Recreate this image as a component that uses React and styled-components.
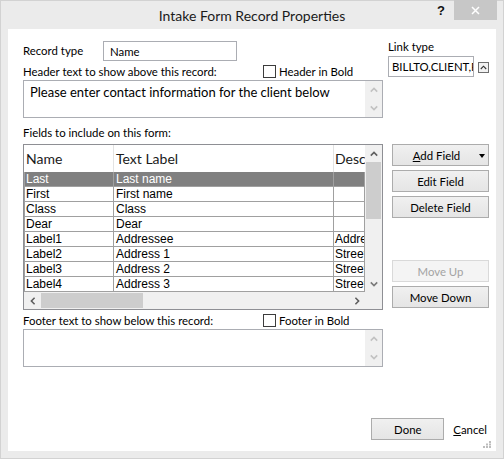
import React from "react";
import styled, { createGlobalStyle } from "styled-components";

const UI = `Lato, "Noto Sans", "Liberation Sans", sans-serif`;
const LEGACY = `"Liberation Sans", Arial, sans-serif`;

const GlobalStyle = createGlobalStyle`
  html, body { margin: 0; padding: 0; background: #ffffff; }
  body { font-family: ${UI}; font-size: 11.4px; color: #000; }
  * { box-sizing: border-box; }
`;

const Window = styled.div`
  width: 504px;
  height: 459px;
  background: #ebebeb;
  border: 1px solid #d2d2d2;
  display: flex;
  flex-direction: column;
`;

const TitleBar = styled.div`
  height: 28px;
  flex: none;
  display: flex;
  align-items: center;
  justify-content: center;
  position: relative;
`;

const Title = styled.div`
  font-size: 14px;
  color: #1b1b1b;
  padding-top: 1px;
`;

const CaptionButtons = styled.div`
  position: absolute;
  top: -1px;
  right: 6px;
  display: flex;
`;

const HelpButton = styled.div`
  width: 26px;
  height: 20px;
  display: flex;
  align-items: center;
  justify-content: center;
  font-family: ${LEGACY};
  font-weight: bold;
  font-size: 13px;
  color: #111;
`;

const CloseButton = styled.div`
  width: 43px;
  height: 20px;
  background: #c7c7c7;
  display: flex;
  align-items: center;
  justify-content: center;
`;

const Client = styled.div`
  flex: 1;
  margin: 0 7px 7px;
  background: #ffffff;
  padding: 10px 7px 11px 15px;
  display: flex;
  flex-direction: column;
  position: relative;
`;

const Body = styled.div`
  display: grid;
  grid-template-columns: 360px 101px;
  column-gap: 5px;
`;

const LeftColumn = styled.div`
  display: flex;
  flex-direction: column;
`;

const RightColumn = styled.div`
  display: flex;
  flex-direction: column;
`;

const RecordRow = styled.div`
  margin-top: 2px;
  height: 20px;
  display: flex;
  align-items: center;
`;

const FieldLabel = styled.span`
  width: 80px;
  line-height: 16px;
`;

const TextInput = styled.div`
  width: ${(p) => p.$width}px;
  height: ${(p) => p.$height || 20}px;
  border: 1px solid #abadb3;
  padding: 0 ${(p) => p.$pad ?? 6}px;
  display: flex;
  align-items: center;
  white-space: nowrap;
  overflow: hidden;
  background: #fff;
`;

const CheckRow = styled.div`
  height: ${(p) => p.$height}px;
  padding-top: 2px;
  display: grid;
  grid-template-columns: 240px auto;
  align-items: center;
`;

const CheckLabel = styled.label`
  display: flex;
  align-items: center;
  gap: 3px;
`;

const Box = styled.span`
  width: 13px;
  height: 13px;
  border: 1px solid #3c3c3c;
  background: #fff;
`;

const Memo = styled.div`
  height: 38px;
  border: 1px solid #abadb3;
  display: flex;
`;

const MemoText = styled.div`
  flex: 1;
  padding: 2px 6px;
  font-family: ${UI};
  font-size: 13px;
  line-height: 18px;
`;

const MemoScroll = styled.div`
  width: 17px;
  background: #f0f0f0;
  display: flex;
  flex-direction: column;
  justify-content: space-between;
`;

const ArrowCell = styled.div`
  width: ${(p) => p.$w || 17}px;
  height: ${(p) => p.$h || 17}px;
  display: flex;
  align-items: center;
  justify-content: center;
  flex: none;
`;

const SectionLabel = styled.div`
  height: 26px;
  padding-top: 7px;
  line-height: 16px;
`;

const Table = styled.div`
  height: 166px;
  border: 1px solid #8e8f94;
  display: grid;
  grid-template-columns: 341px 17px;
  grid-template-rows: 147px 17px;
  background: #fff;
`;

const ListArea = styled.div`
  overflow: hidden;
`;

const HeaderRow = styled.div`
  display: grid;
  grid-template-columns: 90px 220px 31px;
  height: 27px;
`;

const HeaderCell = styled.div`
  font-family: ${UI};
  font-size: 14px;
  display: flex;
  align-items: center;
  padding-left: ${(p) => p.$pad}px;
  border-right: ${(p) => (p.$last ? "none" : "1px solid #e3e3e3")};
  white-space: nowrap;
  overflow: hidden;
  color: #1a1a1a;
`;

const Row = styled.div`
  display: grid;
  grid-template-columns: 90px 220px 31px;
  height: 15px;
  background: ${(p) => (p.$selected ? "#808080" : "#ffffff")};
  color: ${(p) => (p.$selected ? "#ffffff" : "#000000")};
`;

const Cell = styled.div`
  font-family: ${LEGACY};
  font-size: 12px;
  line-height: 14px;
  padding-left: ${(p) => p.$pad}px;
  border-bottom: 1px solid #a0a0a0;
  border-right: 1px solid #a0a0a0;
  border-left: ${(p) => (p.$first ? "1px solid #a0a0a0" : "none")};
  white-space: nowrap;
  overflow: hidden;
`;

const VScroll = styled.div`
  background: #f0f0f0;
  display: flex;
  flex-direction: column;
`;

const VThumb = styled.div`
  height: 57px;
  margin: 0 1px;
  background: #cdcdcd;
`;

const Spacer = styled.div`
  flex: 1;
`;

const HScroll = styled.div`
  background: #f0f0f0;
  display: flex;
  align-items: stretch;
`;

const HThumb = styled.div`
  width: 102px;
  margin: 1px 0;
  background: #cdcdcd;
`;

const Corner = styled.div`
  background: #f0f0f0;
`;

const LinkLabel = styled.div`
  line-height: 16px;
`;

const LinkRow = styled.div`
  margin-top: 1px;
  display: flex;
  align-items: center;
  gap: 4px;
`;

const SpinButton = styled.div`
  width: 11px;
  height: 11px;
  border: 1px solid #6f6f6f;
  background: #f2f2f2;
  display: flex;
  align-items: center;
  justify-content: center;
  margin-top: 1px;
`;

const ButtonStack = styled.div`
  margin-top: 67px;
  padding-left: 4px;
  display: flex;
  flex-direction: column;
  gap: 4px;
`;

const Button = styled.div`
  width: ${(p) => p.$width || 97}px;
  height: 22px;
  margin-top: ${(p) => p.$gapTop || 0}px;
  border: 1px solid ${(p) => (p.$disabled ? "#d9d9d9" : "#acacac")};
  background: ${(p) =>
    p.$disabled ? "#f4f4f4" : "linear-gradient(#f0f0f0, #e5e5e5)"};
  color: ${(p) => (p.$disabled ? "#a3a3a3" : "#000")};
  display: flex;
  align-items: center;
  justify-content: center;
  position: relative;
  font-size: 11.4px;
  flex: none;
`;

const ButtonText = styled.span`
  padding-right: ${(p) => p.$shift || 0}px;
`;

const Caret = styled.span`
  position: absolute;
  right: 3px;
  top: 9px;
  width: 0;
  height: 0;
  border-left: 3.5px solid transparent;
  border-right: 3.5px solid transparent;
  border-top: 4px solid #000;
`;

const U = styled.span`
  text-decoration: underline;
  text-underline-offset: 1px;
`;

const FooterRow = styled.div`
  margin-top: auto;
  display: flex;
  justify-content: flex-end;
  align-items: center;
  gap: 9px;
  padding-right: 2px;
`;

const LinkText = styled.span`
  font-size: 11.4px;
`;

const Grip = styled.svg`
  position: absolute;
  right: 5px;
  bottom: 3px;
`;

const Chevron = ({ dir = "up", color = "#606060" }) => {
  const rot = { up: 0, down: 180, left: -90, right: 90 }[dir];
  return (
    <svg width="8" height="8" viewBox="0 0 8 8" style={{ transform: `rotate(${rot}deg)` }}>
      <polyline
        points="0.8,5.6 4,2.4 7.2,5.6"
        fill="none"
        stroke={color}
        strokeWidth="1.6"
      />
    </svg>
  );
};

const rows = [
  ["Last", "Last name", "", true],
  ["First", "First name", ""],
  ["Class", "Class", ""],
  ["Dear", "Dear", ""],
  ["Label1", "Addressee", "Addressee"],
  ["Label2", "Address 1", "Street 1"],
  ["Label3", "Address 2", "Street 2"],
  ["Label4", "Address 3", "Street 3"],
];

export default function App() {
  return (
    <>
      <GlobalStyle />
      <Window>
        <TitleBar>
          <Title>Intake Form Record Properties</Title>
          <CaptionButtons>
            <HelpButton>?</HelpButton>
            <CloseButton>
              <svg width="9" height="9" viewBox="0 0 9 9">
                <path d="M1 1 L8 8 M8 1 L1 8" stroke="#fff" strokeWidth="1.5" />
              </svg>
            </CloseButton>
          </CaptionButtons>
        </TitleBar>
        <Client>
          <Body>
            <LeftColumn>
              <RecordRow>
                <FieldLabel>Record type</FieldLabel>
                <TextInput $width={134}>Name</TextInput>
              </RecordRow>
              <CheckRow $height={19}>
                <span>Header text to show above this record:</span>
                <CheckLabel>
                  <Box />
                  Header in Bold
                </CheckLabel>
              </CheckRow>
              <Memo>
                <MemoText>Please enter contact information for the client below</MemoText>
                <MemoScroll>
                  <ArrowCell $h={18}>
                    <Chevron dir="up" color="#c2c2c2" />
                  </ArrowCell>
                  <ArrowCell $h={18}>
                    <Chevron dir="down" color="#c2c2c2" />
                  </ArrowCell>
                </MemoScroll>
              </Memo>
              <SectionLabel>Fields to include on this form:</SectionLabel>
              <Table>
                <ListArea>
                  <HeaderRow>
                    <HeaderCell $pad={2}>Name</HeaderCell>
                    <HeaderCell $pad={2}>Text Label</HeaderCell>
                    <HeaderCell $pad={1} $last>Description</HeaderCell>
                  </HeaderRow>
                  {rows.map(([name, label, desc, sel]) => (
                    <Row key={name} $selected={sel}>
                      <Cell $first $pad={1}>{name}</Cell>
                      <Cell $pad={2}>{label}</Cell>
                      <Cell $pad={1}>{desc}</Cell>
                    </Row>
                  ))}
                </ListArea>
                <VScroll>
                  <ArrowCell>
                    <Chevron dir="up" />
                  </ArrowCell>
                  <VThumb />
                  <Spacer />
                  <ArrowCell>
                    <Chevron dir="down" color="#7a7a7a" />
                  </ArrowCell>
                </VScroll>
                <HScroll>
                  <ArrowCell>
                    <Chevron dir="left" />
                  </ArrowCell>
                  <HThumb />
                  <Spacer />
                  <ArrowCell>
                    <Chevron dir="right" />
                  </ArrowCell>
                </HScroll>
                <Corner />
              </Table>
              <CheckRow $height={19}>
                <span>Footer text to show below this record:</span>
                <CheckLabel>
                  <Box />
                  Footer in Bold
                </CheckLabel>
              </CheckRow>
              <Memo>
                <MemoText />
                <MemoScroll>
                  <ArrowCell $h={18}>
                    <Chevron dir="up" color="#c2c2c2" />
                  </ArrowCell>
                  <ArrowCell $h={18}>
                    <Chevron dir="down" color="#c2c2c2" />
                  </ArrowCell>
                </MemoScroll>
              </Memo>
            </LeftColumn>
            <RightColumn>
              <LinkLabel>Link type</LinkLabel>
              <LinkRow>
                <TextInput $width={88} $height={21} $pad={3}>
                  BILLTO,CLIENT,PROSPECT
                </TextInput>
                <SpinButton>
                  <svg width="7" height="5" viewBox="0 0 7 5">
                    <polyline points="0.8,4 3.5,1.2 6.2,4" fill="none" stroke="#333" strokeWidth="1.1" />
                  </svg>
                </SpinButton>
              </LinkRow>
              <ButtonStack>
                <Button>
                  <ButtonText $shift={8}>
                    <U>A</U>dd Field
                  </ButtonText>
                  <Caret />
                </Button>
                <Button>Edit Field</Button>
                <Button>Delete Field</Button>
                <Button $disabled $gapTop={38}>Move Up</Button>
                <Button>Move Down</Button>
              </ButtonStack>
            </RightColumn>
          </Body>
          <FooterRow>
            <Button $width={73}>Done</Button>
            <LinkText>
              <U>C</U>ancel
            </LinkText>
          </FooterRow>
          <Grip width="8" height="7" viewBox="0 0 8 7">
            <rect x="6" y="0" width="2" height="2" fill="#bdbdbd" />
            <rect x="3" y="2.5" width="2" height="2" fill="#bdbdbd" />
            <rect x="6" y="2.5" width="2" height="2" fill="#bdbdbd" />
            <rect x="0" y="5" width="2" height="2" fill="#bdbdbd" />
            <rect x="3" y="5" width="2" height="2" fill="#bdbdbd" />
            <rect x="6" y="5" width="2" height="2" fill="#bdbdbd" />
          </Grip>
        </Client>
      </Window>
    </>
  );
}
